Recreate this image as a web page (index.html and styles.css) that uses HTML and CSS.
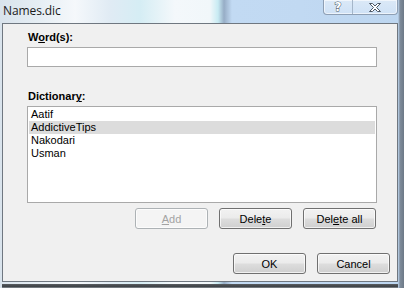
FILE: index.html
```html
<!DOCTYPE html>
<html>
<head>
<meta charset="utf-8">
<title>Names.dic</title>
<link rel="stylesheet" href="styles.css">
</head>
<body>
<div class="window">
  <div class="titlebar">
    <span class="title">Names.dic</span>
    <div class="caption-buttons">
      <span class="cap-btn help">?</span>
      <span class="cap-btn close">
        <svg width="14" height="11" viewBox="0 0 14 11">
          <path d="M1.5 1.5h3l2.5 2.5l2.5-2.5h3l-4 4l4 4h-3l-2.5-2.5l-2.5 2.5h-3l4-4z" fill="#fff" stroke="#4d5866" stroke-width="1" stroke-linejoin="round"/>
        </svg>
      </span>
    </div>
  </div>

  <div class="client">
    <div class="field">
      <label class="label">W<u>o</u>rd(s):</label>
      <div class="textbox"></div>
    </div>

    <div class="field dict">
      <label class="label">Dictionar<u>y</u>:</label>
      <ul class="listbox">
        <li>Aatif</li>
        <li class="selected">AddictiveTips</li>
        <li>Nakodari</li>
        <li>Usman</li>
      </ul>
    </div>

    <div class="button-row">
      <button class="btn" disabled><u>A</u>dd</button>
      <button class="btn">Dele<u>t</u>e</button>
      <button class="btn">Del<u>e</u>te all</button>
    </div>

    <div class="dialog-row">
      <button class="btn">OK</button>
      <button class="btn">Cancel</button>
    </div>
  </div>
  <div class="frame-bottom"></div>
</div>
</body>
</html>
```

FILE: styles.css
```css
html, body {
   margin: 0;
   padding: 0;
}

body {
   width: 404px;
   height: 288px;
   overflow: hidden;
   font-family: "Liberation Sans", Arial, sans-serif;
   font-size: 11px;
   color: #000;
}

.window {
   width: 404px;
   height: 288px;
   background: linear-gradient(90deg, #d9e3ec 0px, #e6eef4 40px, #f5f8fb 75px, #e0ebf4 110px, #d5edf4 140px, #f4f8fb 175px, #f1f7fa 210px, #c8ebf3 218px, #97adc6 224px, #c2daf3 232px, #c1d9f2 300px, #bdd6f0 398px, #7f8c9b 400px, #6d7987 404px);
   display: flex;
   flex-direction: column;
}

/* title bar */
.titlebar {
   height: 24px;
   display: flex;
   justify-content: space-between;
   align-items: flex-start;
}

.title {
   font-family: "Open Sans", "Noto Sans", sans-serif;
   font-size: 12px;
   line-height: 14px;
   color: #1b1b1b;
   padding: 4px 0 0 3px;
   letter-spacing: -0.1px;
}

.caption-buttons {
   display: flex;
   margin-right: 6px;
   height: 14px;
   border: 1px solid #8e9fb4;
   border-top: none;
   border-radius: 0 0 4px 4px;
   background: linear-gradient(180deg, #dbe9f7, #cfe2f6);
   box-shadow: inset 0 0 0 1px rgba(255,255,255,0.6);
}

.cap-btn {
   display: flex;
   align-items: center;
   justify-content: center;
}

.help {
   width: 28px;
   border-right: 1px solid #a5b6c9;
   font-family: "DejaVu Sans", sans-serif;
   font-weight: bold;
   font-size: 12px;
   color: #fff;
   -webkit-text-stroke: 1px #4d5866;
   paint-order: stroke fill;
}

.close {
   width: 44px;
}

/* dialog body */
.client {
   margin: 0 6px 0 2px;
   height: 255px;
   border: 1px solid #6f7780;
   background: #f0f0f0;
   padding: 7px 7px 0 24px;
   display: flex;
   flex-direction: column;
}

.field {
   width: 350px;
   display: flex;
   flex-direction: column;
   gap: 3px;
}

.dict {
   margin-top: 23px;
}

.label {
   font-weight: bold;
   line-height: 13px;
   padding-left: 1px;
}

.textbox {
   height: 18px;
   border: 1px solid #a9a9a9;
   background: #fff;
}

.listbox {
   list-style: none;
   margin: 0;
   height: 93px;
   padding: 1px;
   border: 1px solid #a9a9a9;
   background: #fff;
}

.listbox li {
   height: 13px;
   line-height: 13px;
   padding-left: 2px;
}

.listbox .selected {
   background: #dcdcdc;
}

u {
   text-underline-offset: 1px;
}

/* buttons */
.button-row {
   width: 349px;
   margin-top: 5px;
   display: flex;
   justify-content: flex-end;
   gap: 11px;
}

.dialog-row {
   margin-top: 24px;
   display: flex;
   justify-content: flex-end;
   gap: 11px;
}

.btn {
   width: 73px;
   height: 21px;
   padding: 0;
   font-family: "Liberation Sans", Arial, sans-serif;
   font-size: 11px;
   color: #000;
   border: 1px solid #707070;
   border-radius: 3px;
   background: linear-gradient(180deg, #f2f2f2 0%, #ebebeb 48%, #dddddd 52%, #cfcfcf 100%);
   box-shadow: inset 0 0 0 1px rgba(255,255,255,0.7);
}

.btn:disabled {
   color: #a3a3a3;
   border-color: #adb2b5;
   background: #f4f4f4;
}

.frame-bottom {
   height: 4px;
   margin: 2px 6px 0 2px;
   background: linear-gradient(180deg, #5b5f63, #3c4044 60%, #8c939a);
}
```
